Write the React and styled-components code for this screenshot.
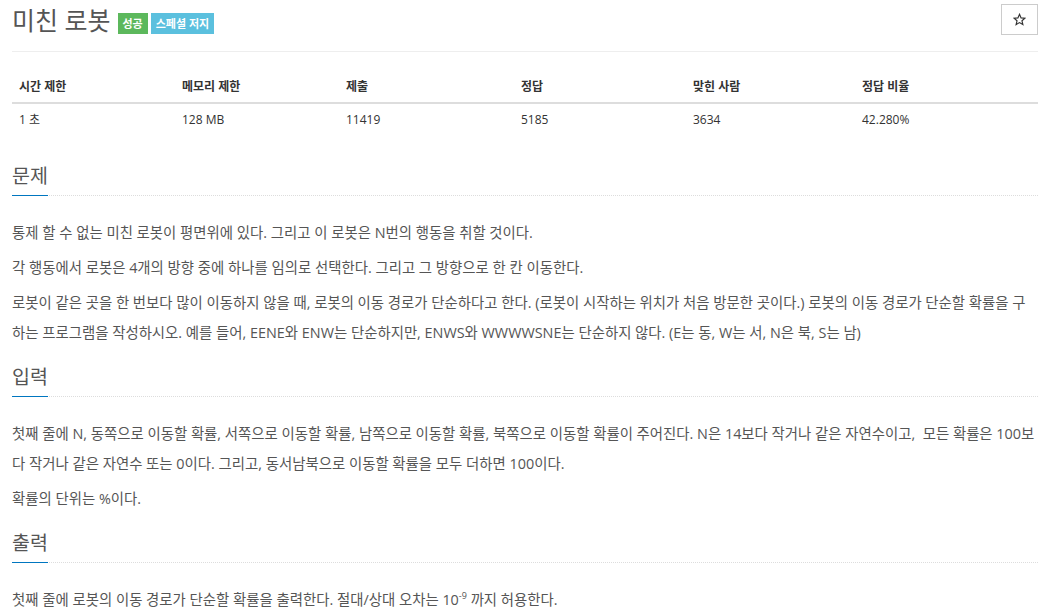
import React from "react";
import styled, { createGlobalStyle } from "styled-components";

const GlobalStyle = createGlobalStyle`
  html, body {
    margin: 0;
    padding: 0;
    background: #fff;
  }
  body {
    font-family: "Open Sans", "Noto Sans CJK KR", sans-serif;
    color: #555;
  }
`;

const Page = styled.div`
  padding: 0 17px 0 12px;
`;

const TitleBar = styled.div`
  display: flex;
  align-items: flex-start;
  justify-content: space-between;
  height: 52px;
  border-bottom: 1px solid #eee;
  box-sizing: border-box;
  padding-top: 2px;
`;

const TitleLeft = styled.div`
  display: flex;
  align-items: center;
  gap: 3px;
`;

const Title = styled.h1`
  margin: 0 4px 0 0;
  font-size: 25px;
  font-weight: 400;
  color: #555;
  line-height: 36px;
`;

const Badge = styled.span`
  display: inline-block;
  background: ${(p) => p.bg};
  color: #fff;
  font-size: 11px;
  font-weight: 700;
  line-height: 21px;
  padding: 0 ${(p) => p.pad}px;
  margin-top: 6px;
`;

const StarButton = styled.button`
  width: 37px;
  height: 31px;
  margin-top: 2px;
  background: #fff;
  border: 1px solid #ccc;
  padding: 0;
  display: flex;
  align-items: center;
  justify-content: center;
`;

const InfoTable = styled.table`
  width: 100%;
  margin-top: 17px;
  border-collapse: collapse;
  table-layout: fixed;
  font-size: 12px;
  color: #333;

  th {
    text-align: left;
    font-weight: 700;
    padding: 9px 7px 6px;
    line-height: 18px;
    border-bottom: 2px solid #ddd;
  }

  td {
    padding: 7px 7px;
    line-height: 18px;
  }
`;

const Section = styled.section`
  margin-top: ${(p) => p.top}px;
`;

const HeadingRow = styled.div`
  border-bottom: 1px dotted #ddd;
  display: flex;
`;

const Heading = styled.h2`
  margin: 0;
  font-size: 19.5px;
  font-weight: 400;
  color: #555;
  line-height: 26px;
  padding-bottom: 6px;
  border-bottom: 1px solid #0076c0;
  margin-bottom: -1px;
`;

const Body = styled.div`
  padding-top: 22px;
  font-size: 14.4px;
  line-height: 30px;

  p {
    margin: 0 0 5px;
  }

  sup {
    font-size: 9px;
    line-height: 0;
    vertical-align: 6px;
  }
`;

const stats = [
  ["시간 제한", "1 초", 163],
  ["메모리 제한", "128 MB", 164],
  ["제출", "11419", 175],
  ["정답", "5185", 172],
  ["맞힌 사람", "3634", 169],
  ["정답 비율", "42.280%", null],
];

const StarIcon = () => (
  <svg width="13" height="13" viewBox="0 0 24 24">
    <path
      d="M12 2.5l2.9 6.6 7.1.6-5.4 4.7 1.6 7-6.2-3.7-6.2 3.7 1.6-7L2 9.7l7.1-.6z"
      fill="none"
      stroke="#333"
      strokeWidth="2.2"
      strokeLinejoin="miter"
    />
  </svg>
);

const App = () => {
  return (
    <>
      <GlobalStyle />
      <Page>
        <TitleBar>
          <TitleLeft>
            <Title>미친 로봇</Title>
            <Badge bg="#5cb85c" pad={5}>
              성공
            </Badge>
            <Badge bg="#5bc0de" pad={5}>
              스페셜 저지
            </Badge>
          </TitleLeft>
          <StarButton>
            <StarIcon />
          </StarButton>
        </TitleBar>

        <InfoTable>
          <colgroup>
            {stats.map(([label, , w]) => (
              <col key={label} style={w ? { width: w } : undefined} />
            ))}
          </colgroup>
          <thead>
            <tr>
              {stats.map(([label]) => (
                <th key={label}>{label}</th>
              ))}
            </tr>
          </thead>
          <tbody>
            <tr>
              {stats.map(([label, value]) => (
                <td key={label}>{value}</td>
              ))}
            </tr>
          </tbody>
        </InfoTable>

        <Section top={27}>
          <HeadingRow>
            <Heading>문제</Heading>
          </HeadingRow>
          <Body>
            <p>통제 할 수 없는 미친 로봇이 평면위에 있다. 그리고 이 로봇은 N번의 행동을 취할 것이다.</p>
            <p>각 행동에서 로봇은 4개의 방향 중에 하나를 임의로 선택한다. 그리고 그 방향으로 한 칸 이동한다.</p>
            <p>
              로봇이 같은 곳을 한 번보다 많이 이동하지 않을 때, 로봇의 이동 경로가 단순하다고 한다. (로봇이
              시작하는 위치가 처음 방문한 곳이다.) 로봇의 이동 경로가 단순할 확률을 구하는 프로그램을
              작성하시오. 예를 들어, EENE와 ENW는 단순하지만, ENWS와 WWWWSNE는 단순하지 않다. (E는 동, W는
              서, N은 북, S는 남)
            </p>
          </Body>
        </Section>

        <Section top={16}>
          <HeadingRow>
            <Heading>입력</Heading>
          </HeadingRow>
          <Body>
            <p>
              첫째 줄에 N, 동쪽으로 이동할 확률, 서쪽으로 이동할 확률, 남쪽으로 이동할 확률, 북쪽으로 이동할
              확률이 주어진다. N은 14보다 작거나 같은 자연수이고,{"\u00a0"} 모든 확률은 100보다 작거나 같은
              자연수 또는 0이다. 그리고, 동서남북으로 이동할 확률을 모두 더하면 100이다.
            </p>
            <p>확률의 단위는 %이다.</p>
          </Body>
        </Section>

        <Section top={16}>
          <HeadingRow>
            <Heading>출력</Heading>
          </HeadingRow>
          <Body>
            <p>
              첫째 줄에 로봇의 이동 경로가 단순할 확률을 출력한다. 절대/상대 오차는 10<sup>-9</sup> 까지
              허용한다.
            </p>
          </Body>
        </Section>
      </Page>
    </>
  );
};

export default App;
